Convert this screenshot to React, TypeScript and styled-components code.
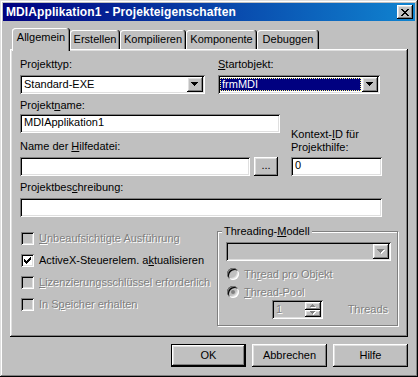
import styled, { createGlobalStyle, css } from "styled-components";

//====================================================================>

const GlobalStyle = createGlobalStyle`
  html, body {
    margin: 0;
    padding: 0;
    background: #c0c0c0;
  }
  body {
    font-family: "Liberation Sans", Arial, sans-serif;
    font-size: 11px;
    line-height: 13px;
    color: #000;
    overflow: hidden;
  }
  * {
    box-sizing: border-box;
  }
`

const raised = css`
  box-shadow: inset -1px -1px #000, inset 1px 1px #fff, inset -2px -2px #808080, inset 2px 2px #dfdfdf;
`

const sunken = css`
  box-shadow: inset 1px 1px #808080, inset -1px -1px #fff, inset 2px 2px #000, inset -2px -2px #dfdfdf;
`

const disabledText = css`
  color: #808080;
  text-shadow: 1px 1px #fff;
`

//====================================================================>

const Window = styled.div`
  width: 418px;
  height: 377px;
  padding: 3px;
  background: #c0c0c0;
  box-shadow: inset -1px -1px #000, inset 1px 1px #dfdfdf, inset -2px -2px #808080, inset 2px 2px #fff;
  display: flex;
  flex-direction: column;
`

const TitleBar = styled.div`
  height: 18px;
  display: flex;
  align-items: center;
  justify-content: space-between;
  padding: 0 2px 0 3px;
  background: linear-gradient(90deg, #000080, #1084d0);
`

const TitleText = styled.span`
  color: #fff;
  font-weight: bold;
  font-size: 12px;
  letter-spacing: 0.1px;
  white-space: nowrap;
`

const CloseButton = styled.div`
  width: 16px;
  height: 14px;
  background: #c0c0c0;
  ${raised}
  display: flex;
  align-items: center;
  justify-content: center;
  svg { display: block; }
`

const DialogBody = styled.div`
  padding: 7px 7px 0 7px;
`

const TabStrip = styled.div`
  display: flex;
  align-items: flex-end;
  height: 21px;
  padding-left: 2px;
`

const Tab = styled.div<{ $active?: boolean; $width: number }>`
  width: ${p => p.$width}px;
  height: ${p => (p.$active ? 23 : 19)}px;
  margin-bottom: ${p => (p.$active ? -2 : 0)}px;
  padding-top: 3px;
  text-align: center;
  white-space: nowrap;
  background: #c0c0c0;
  border-radius: 3px 3px 0 0;
  box-shadow: inset -1px 0 #000, inset 1px 1px #fff, inset -2px 0 #808080;
  z-index: ${p => (p.$active ? 1 : 0)};
`

const TabPanel = styled.div`
  height: 288px;
  padding: 9px 0 0 10px;
  ${raised}
  display: flex;
  flex-direction: column;
`

const Row = styled.div<{ $mt?: number; $gap?: number }>`
  display: flex;
  margin-top: ${p => p.$mt ?? 0}px;
  gap: ${p => p.$gap ?? 0}px;
`

const Field = styled.div<{ $mt?: number }>`
  display: flex;
  flex-direction: column;
  margin-top: ${p => p.$mt ?? 0}px;
`

const RightColumn = styled.div`
  width: 91px;
  margin-left: 11px;
  display: flex;
  flex-direction: column;
  justify-content: flex-end;
`

const Label = styled.div<{ $gap?: number }>`
  line-height: 13px;
  margin-bottom: ${p => p.$gap ?? 4}px;
  white-space: nowrap;
`

const Combo = styled.div<{ $width: number; $disabled?: boolean }>`
  width: ${p => p.$width}px;
  height: 19px;
  padding: 2px;
  background: ${p => (p.$disabled ? "#c0c0c0" : "#fff")};
  ${sunken}
  display: flex;
`

const ComboText = styled.div<{ $selected?: boolean }>`
  flex: 1;
  margin: 1px 1px 1px 0;
  padding-left: 2px;
  line-height: 13px;
  white-space: nowrap;
  background: ${p => (p.$selected ? "#000080" : "transparent")};
  color: ${p => (p.$selected ? "#fff" : "#000")};
  outline: ${p => (p.$selected ? "1px dotted #ffff80" : "none")};
  outline-offset: -1px;
`

const DropButton = styled.div`
  width: 16px;
  height: 15px;
  background: #c0c0c0;
  ${raised}
  display: flex;
  align-items: center;
  justify-content: center;
  svg { display: block; }
`

const TextBox = styled.div<{ $width: number }>`
  width: ${p => p.$width}px;
  height: 19px;
  padding: 2px 0 0 4px;
  background: #fff;
  ${sunken}
  line-height: 13px;
  white-space: nowrap;
`

const SmallButton = styled.div`
  width: 24px;
  height: 19px;
  margin-left: 4px;
  background: #c0c0c0;
  ${raised}
  display: flex;
  align-items: center;
  justify-content: center;
  padding-bottom: 2px;
`

const CheckColumn = styled.div`
  width: 197px;
  padding-top: 7px;
  display: flex;
  flex-direction: column;
  gap: 9px;
`

const CheckRow = styled.div`
  display: flex;
  align-items: center;
  gap: 5px;
  height: 13px;
  margin-left: 1px;
`

const CheckBox = styled.div<{ $disabled?: boolean }>`
  width: 13px;
  height: 13px;
  flex-shrink: 0;
  background: ${p => (p.$disabled ? "#c0c0c0" : "#fff")};
  ${sunken}
  display: flex;
  align-items: center;
  justify-content: center;
  svg { display: block; }
`

const OptionText = styled.span<{ $disabled?: boolean }>`
  white-space: nowrap;
  ${p => p.$disabled && disabledText}
`

const GroupBox = styled.fieldset`
  width: 181px;
  margin: 0;
  min-width: 0;
  padding: 4px 6px 6px 8px;
  border: 1px solid #808080;
  box-shadow: inset 1px 1px #fff, 1px 1px #fff;
  display: flex;
  flex-direction: column;
`

const Legend = styled.legend`
  padding: 0 2px;
  margin-left: -4px;
  line-height: 13px;
  background: #c0c0c0;
`

const RadioRow = styled.div<{ $mt: number }>`
  display: flex;
  align-items: center;
  gap: 5px;
  height: 12px;
  margin-top: ${p => p.$mt}px;
  margin-left: 1px;
`

const Radio = styled.div<{ $checked?: boolean }>`
  width: 12px;
  height: 12px;
  flex-shrink: 0;
  border-radius: 50%;
  background: #c0c0c0;
  box-shadow: inset 1px 1px #808080, inset -1px -1px #fff, inset 2px 2px #000, inset -2px -2px #dfdfdf;
  display: flex;
  align-items: center;
  justify-content: center;

  &::after {
    content: "";
    width: 4px;
    height: 4px;
    border-radius: 50%;
    background: ${p => (p.$checked ? "#808080" : "transparent")};
  }
`

const SpinRow = styled.div`
  display: flex;
  align-items: center;
  margin-top: 2px;
`

const Spin = styled.div`
  width: 51px;
  height: 19px;
  margin-left: 46px;
  padding: 2px;
  background: #c0c0c0;
  ${sunken}
  display: flex;
`

const SpinValue = styled.div`
  flex: 1;
  padding-left: 2px;
  line-height: 15px;
  ${disabledText}
`

const SpinButtons = styled.div`
  width: 16px;
  display: flex;
  flex-direction: column;
`

const SpinButton = styled.div`
  flex: 1;
  background: #c0c0c0;
  ${raised}
  display: flex;
  align-items: center;
  justify-content: center;
  svg { display: block; }
`

const ThreadsText = styled.span`
  margin-left: auto;
  margin-right: 3px;
  ${disabledText}
`

const ButtonBar = styled.div`
  display: flex;
  justify-content: flex-end;
  gap: 6px;
  margin-top: 7px;
`

const PushButton = styled.div<{ $default?: boolean }>`
  width: 75px;
  height: 23px;
  background: #c0c0c0;
  display: flex;
  align-items: center;
  justify-content: center;
  ${raised}
  ${p => p.$default && css`border: 1px solid #000;`}
`

//====================================================================>

function CloseGlyph() {
  return (
    <svg width="8" height="7" viewBox="0 0 8 7" shapeRendering="crispEdges">
      <path
        fill="#000"
        d="M0 0h2v1H0z M6 0h2v1H6z M1 1h2v1H1z M5 1h2v1H5z M2 2h4v1H2z M3 3h2v1H3z M2 4h4v1H2z M1 5h2v1H1z M5 5h2v1H5z M0 6h2v1H0z M6 6h2v1H6z"
      />
    </svg>
  )
}

function DownArrow({ disabled }: { disabled?: boolean }) {
  const d = "M0 0h7v1H0z M1 1h5v1H1z M2 2h3v1H2z M3 3h1v1H3z"
  return (
    <svg width="8" height="5" viewBox="0 0 8 5" shapeRendering="crispEdges">
      {disabled && <path fill="#fff" d={d} transform="translate(1 1)" />}
      <path fill={disabled ? "#808080" : "#000"} d={d} />
    </svg>
  )
}

function SpinArrow({ up }: { up?: boolean }) {
  const d = up ? "M2 0h1v1H2z M1 1h3v1H1z M0 2h5v1H0z" : "M0 0h5v1H0z M1 1h3v1H1z M2 2h1v1H2z"
  return (
    <svg width="6" height="4" viewBox="0 0 6 4" shapeRendering="crispEdges">
      <path fill="#fff" d={d} transform="translate(1 1)" />
      <path fill="#808080" d={d} />
    </svg>
  )
}

function CheckMark() {
  return (
    <svg width="7" height="7" viewBox="0 0 7 7" shapeRendering="crispEdges">
      <path
        fill="#000"
        d="M6 0h1v1H6z M5 1h2v1H5z M0 2h1v1H0z M4 2h3v1H4z M0 3h2v1H0z M3 3h3v1H3z M0 4h5v1H0z M1 5h3v1H1z M2 6h1v1H2z"
      />
    </svg>
  )
}

//====================================================================>

const tabs = [
  { label: "Allgemein", width: 58, active: true },
  { label: "Erstellen", width: 50 },
  { label: "Kompilieren", width: 66 },
  { label: "Komponente", width: 71 },
  { label: "Debuggen", width: 62 },
]

function App() {
  return (
    <>
      <GlobalStyle />
      <Window>
        <TitleBar>
          <TitleText>MDIApplikation1 - Projekteigenschaften</TitleText>
          <CloseButton>
            <CloseGlyph />
          </CloseButton>
        </TitleBar>

        <DialogBody>
          <TabStrip>
            {tabs.map(t => (
              <Tab key={t.label} $width={t.width} $active={t.active}>
                {t.label}
              </Tab>
            ))}
          </TabStrip>

          <TabPanel>
            <Row $gap={13}>
              <Field>
                <Label>Projekttyp:</Label>
                <Combo $width={185}>
                  <ComboText>Standard-EXE</ComboText>
                  <DropButton><DownArrow /></DropButton>
                </Combo>
              </Field>
              <Field>
                <Label><u>S</u>tartobjekt:</Label>
                <Combo $width={162}>
                  <ComboText $selected>frmMDI</ComboText>
                  <DropButton><DownArrow /></DropButton>
                </Combo>
              </Field>
            </Row>

            <Row $mt={5}>
              <div>
                <Field>
                  <Label $gap={2}>Projekt<u>n</u>ame:</Label>
                  <TextBox $width={260}>MDIApplikation1</TextBox>
                </Field>
                <Field $mt={7}>
                  <Label>Name der <u>H</u>ilfedatei:</Label>
                  <Row>
                    <TextBox $width={230} />
                    <SmallButton>...</SmallButton>
                  </Row>
                </Field>
              </div>
              <RightColumn>
                <Label $gap={3}>
                  Kontext-<u>I</u>D für<br />Projekthilfe:
                </Label>
                <TextBox $width={91}>0</TextBox>
              </RightColumn>
            </Row>

            <Field $mt={5}>
              <Label>Projektbes<u>c</u>hreibung:</Label>
              <TextBox $width={362} />
            </Field>

            <Row $mt={8}>
              <CheckColumn>
                <CheckRow>
                  <CheckBox $disabled />
                  <OptionText $disabled><u>U</u>nbeaufsichtigte Ausführung</OptionText>
                </CheckRow>
                <CheckRow>
                  <CheckBox><CheckMark /></CheckBox>
                  <OptionText>ActiveX-Steuerelem. a<u>k</u>tualisieren</OptionText>
                </CheckRow>
                <CheckRow>
                  <CheckBox $disabled />
                  <OptionText $disabled><u>L</u>izenzierungsschlüssel erforderlich</OptionText>
                </CheckRow>
                <CheckRow>
                  <CheckBox $disabled />
                  <OptionText $disabled>In S<u>p</u>eicher erhalten</OptionText>
                </CheckRow>
              </CheckColumn>

              <GroupBox>
                <Legend>Threading-<u>M</u>odell</Legend>
                <Combo $width={165} $disabled>
                  <ComboText />
                  <DropButton><DownArrow disabled /></DropButton>
                </Combo>
                <RadioRow $mt={7}>
                  <Radio />
                  <OptionText $disabled>Th<u>r</u>ead pro Objekt</OptionText>
                </RadioRow>
                <RadioRow $mt={6}>
                  <Radio $checked />
                  <OptionText $disabled><u>T</u>hread-Pool</OptionText>
                </RadioRow>
                <SpinRow>
                  <Spin>
                    <SpinValue>1</SpinValue>
                    <SpinButtons>
                      <SpinButton><SpinArrow up /></SpinButton>
                      <SpinButton><SpinArrow /></SpinButton>
                    </SpinButtons>
                  </Spin>
                  <ThreadsText>Threads</ThreadsText>
                </SpinRow>
              </GroupBox>
            </Row>
          </TabPanel>

          <ButtonBar>
            <PushButton $default>OK</PushButton>
            <PushButton>Abbrechen</PushButton>
            <PushButton>Hilfe</PushButton>
          </ButtonBar>
        </DialogBody>
      </Window>
    </>
  )
}
export default App
